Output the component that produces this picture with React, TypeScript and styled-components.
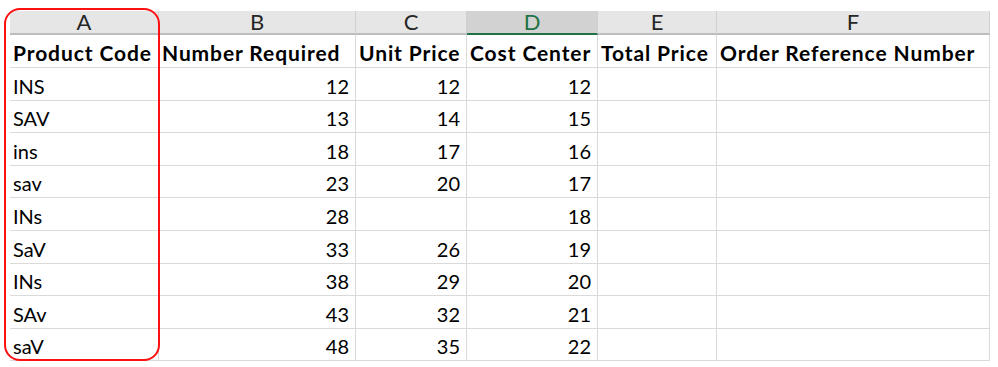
import React from 'react';
import styled, { createGlobalStyle } from 'styled-components';

const GlobalStyle = createGlobalStyle`
  html, body {
    margin: 0;
    padding: 0;
    background: #ffffff;
  }
  body {
    font-family: Lato, 'Liberation Sans', Arial, sans-serif;
  }
`;

const Page = styled.div`
  position: relative;
  width: 998px;
  height: 367px;
  padding: 11px 0 0 10px;
  box-sizing: border-box;
  overflow: hidden;
`;

const Grid = styled.div`
  display: grid;
  grid-template-columns: 149px 197px 111px 131px 119px 273px;
  grid-template-rows: 24px 33px repeat(9, 32.6px);
  width: 980px;
`;

const ColHead = styled.div<{ $active?: boolean }>`
  display: flex;
  align-items: center;
  justify-content: center;
  background: ${(p) => (p.$active ? '#d2d2d2' : '#e6e6e6')};
  border-right: 1px solid #d0d0d0;
  border-bottom: ${(p) => (p.$active ? '2px solid #217346' : '2px solid #bdbdbd')};
  color: ${(p) => (p.$active ? '#217346' : '#262626')};
  font-size: 22px;
  line-height: 1;
  box-sizing: border-box;
`;

const Cell = styled.div<{ $num?: boolean; $bold?: boolean }>`
  display: flex;
  align-items: flex-end;
  justify-content: ${(p) => (p.$num ? 'flex-end' : 'flex-start')};
  padding: 0 6px 4px 3px;
  border-right: 1px solid #dadada;
  border-bottom: 1px solid #dadada;
  box-sizing: border-box;
  color: #000000;
  font-size: ${(p) => (p.$bold ? '21px' : '20px')};
  font-weight: ${(p) => (p.$bold ? 700 : 400)};
  letter-spacing: ${(p) => (p.$bold ? '0.9px' : '0')};
  line-height: 1;
  white-space: nowrap;
  overflow: hidden;
`;

const Highlight = styled.div`
  position: absolute;
  left: 4px;
  top: 8px;
  width: 156px;
  height: 353px;
  border: 2px solid #ff1010;
  border-radius: 16px;
  box-sizing: border-box;
  pointer-events: none;
`;

const letters = ['A', 'B', 'C', 'D', 'E', 'F'];
const headers = [
  'Product Code',
  'Number Required',
  'Unit Price',
  'Cost Center',
  'Total Price',
  'Order Reference Number',
];

const rows: [string, number, number | null, number][] = [
  ['INS', 12, 12, 12],
  ['SAV', 13, 14, 15],
  ['ins', 18, 17, 16],
  ['sav', 23, 20, 17],
  ['INs', 28, null, 18],
  ['SaV', 33, 26, 19],
  ['INs', 38, 29, 20],
  ['SAv', 43, 32, 21],
  ['saV', 48, 35, 22],
];

const App = () => {
  return (
    <Page>
      <GlobalStyle />
      <Grid>
        {letters.map((l) => (
          <ColHead key={l} $active={l === 'D'}>
            {l}
          </ColHead>
        ))}
        {headers.map((h) => (
          <Cell key={h} $bold>
            {h}
          </Cell>
        ))}
        {rows.map((r, i) => (
          <React.Fragment key={i}>
            <Cell>{r[0]}</Cell>
            <Cell $num>{r[1]}</Cell>
            <Cell $num>{r[2] ?? ''}</Cell>
            <Cell $num>{r[3]}</Cell>
            <Cell />
            <Cell />
          </React.Fragment>
        ))}
      </Grid>
      <Highlight />
    </Page>
  );
};

export default App;
